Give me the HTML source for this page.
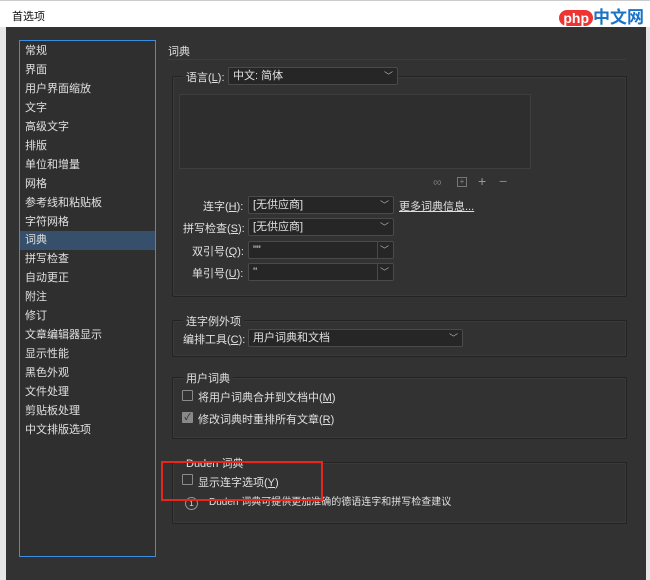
<!DOCTYPE html>
<html><head><meta charset="utf-8"><style>
*{margin:0;padding:0;box-sizing:border-box}
body{width:650px;height:580px;overflow:hidden;background:#e6e6e6;font-family:"Liberation Sans","Noto Sans CJK SC",sans-serif;font-size:11px;color:#e0e0e0;position:relative}
.a{position:absolute;white-space:nowrap}
#title{left:0;top:0;width:650px;height:27px;background:#fff;color:#111;font-size:11px;padding:7px 0 0 12px;border-top:1px solid #ccc}
#win{left:6px;top:27px;width:640px;height:553px;background:#323232}
#side{left:19px;top:40px;width:137px;height:517px;border:1px solid #3b8de0;background:#2f2f2f}
.it{position:absolute;left:5px;height:19px;line-height:19px}
.sel{left:0;width:135px;background:#36506c;padding-left:5px}
.grp{border:1px solid #232323;box-shadow:inset 0 0 0 1px #3a3a3a;border-radius:2px}
.lbl{background:#323232;padding:0 3px}
.dd{background:#262626;border:1px solid #4a4a4a;border-radius:2px;height:18px;line-height:16px;padding-left:4px}
.car{position:absolute;right:4px;top:0;font-size:9px;color:#aaa}
.cb{width:11px;height:11px;border:1px solid #8a8a8a;border-radius:1px}
u{text-decoration:underline}
</style></head><body>
<div class="a" id="title">首选项</div>
<div class="a" style="right:6px;top:3px;height:22px;color:#1a73c8;font-size:17px;font-weight:bold"><span style="background:#e33;color:#fff;border-radius:10px;padding:0 4px;font-size:14px">php</span>中文网</div>
<div class="a" id="win"></div>
<div class="a" id="side">
<div class="it" style="top:1px">常规</div>
<div class="it" style="top:20px">界面</div>
<div class="it" style="top:39px">用户界面缩放</div>
<div class="it" style="top:58px">文字</div>
<div class="it" style="top:77px">高级文字</div>
<div class="it" style="top:96px">排版</div>
<div class="it" style="top:115px">单位和增量</div>
<div class="it" style="top:134px">网格</div>
<div class="it" style="top:153px">参考线和粘贴板</div>
<div class="it" style="top:172px">字符网格</div>
<div class="it sel" style="top:190px">词典</div>
<div class="it" style="top:209px">拼写检查</div>
<div class="it" style="top:228px">自动更正</div>
<div class="it" style="top:247px">附注</div>
<div class="it" style="top:266px">修订</div>
<div class="it" style="top:285px">文章编辑器显示</div>
<div class="it" style="top:304px">显示性能</div>
<div class="it" style="top:323px">黑色外观</div>
<div class="it" style="top:342px">文件处理</div>
<div class="it" style="top:361px">剪贴板处理</div>
<div class="it" style="top:380px">中文排版选项</div>
</div>
<div class="a" style="left:168px;top:43px">词典</div>
<div class="a" style="left:168px;top:59px;width:458px;height:1px;background:#3c3c3c"></div>

<div class="a grp" style="left:172px;top:76px;width:455px;height:221px"></div>
<div class="a lbl" style="left:183px;top:69px">语言(<u>L</u>):</div>
<div class="a dd" style="left:228px;top:67px;width:170px">中文: 简体<span class="car">﹀</span></div>
<div class="a" style="left:179px;top:94px;width:352px;height:75px;border:1px solid #3e3e3e;background:#2e2e2e"></div>
<div class="a" style="left:433px;top:175px;color:#777;font-size:12px">∞</div>
<div class="a" style="left:457px;top:177px;width:10px;height:10px;border:1px solid #777;font-size:8px;line-height:8px;text-align:center;color:#888">+</div>
<div class="a" style="left:478px;top:173px;color:#999;font-size:14px">+</div>
<div class="a" style="left:499px;top:173px;color:#888;font-size:14px">−</div>

<div class="a" style="left:203px;top:198px">连字(<u>H</u>):</div>
<div class="a dd" style="left:248px;top:196px;width:146px">[无供应商]<span class="car">﹀</span></div>
<div class="a" style="left:399px;top:198px;text-decoration:underline">更多词典信息...</div>
<div class="a" style="left:183px;top:220px">拼写检查(<u>S</u>):</div>
<div class="a dd" style="left:248px;top:218px;width:146px">[无供应商]<span class="car">﹀</span></div>
<div class="a" style="left:192px;top:243px">双引号(<u>Q</u>):</div>
<div class="a dd" style="left:248px;top:241px;width:146px">""<span style="position:absolute;left:128px;top:0;height:16px;border-left:1px solid #4a4a4a"></span><span class="car">﹀</span></div>
<div class="a" style="left:192px;top:265px">单引号(<u>U</u>):</div>
<div class="a dd" style="left:248px;top:263px;width:146px">''<span style="position:absolute;left:128px;top:0;height:16px;border-left:1px solid #4a4a4a"></span><span class="car">﹀</span></div>

<div class="a grp" style="left:172px;top:320px;width:455px;height:37px"></div>
<div class="a lbl" style="left:183px;top:313px">连字例外项</div>
<div class="a" style="left:183px;top:331px">编排工具(<u>C</u>):</div>
<div class="a dd" style="left:248px;top:329px;width:215px">用户词典和文档<span class="car">﹀</span></div>

<div class="a grp" style="left:172px;top:377px;width:455px;height:62px"></div>
<div class="a lbl" style="left:183px;top:370px">用户词典</div>
<div class="a cb" style="left:182px;top:390px"></div>
<div class="a" style="left:198px;top:389px">将用户词典合并到文档中(<u>M</u>)</div>
<div class="a cb" style="left:182px;top:412px;background:#888;color:#222;font-size:9px;line-height:9px;text-align:center">✓</div>
<div class="a" style="left:198px;top:411px">修改词典时重排所有文章(<u>R</u>)</div>

<div class="a grp" style="left:172px;top:462px;width:455px;height:62px"></div>
<div class="a lbl" style="left:183px;top:455px">Duden 词典</div>
<div class="a cb" style="left:182px;top:474px"></div>
<div class="a" style="left:198px;top:474px">显示连字选项(<u>Y</u>)</div>
<div class="a" style="left:185px;top:497px;width:13px;height:13px;border:1px solid #999;border-radius:50%;font-size:8px;line-height:11px;text-align:center">1</div>
<div class="a" style="left:209px;top:493px;font-size:10px">Duden 词典可提供更加准确的德语连字和拼写检查建议</div>
<div class="a" style="left:161px;top:461px;width:162px;height:40px;border:2px solid #e8261c"></div>
</body></html>
